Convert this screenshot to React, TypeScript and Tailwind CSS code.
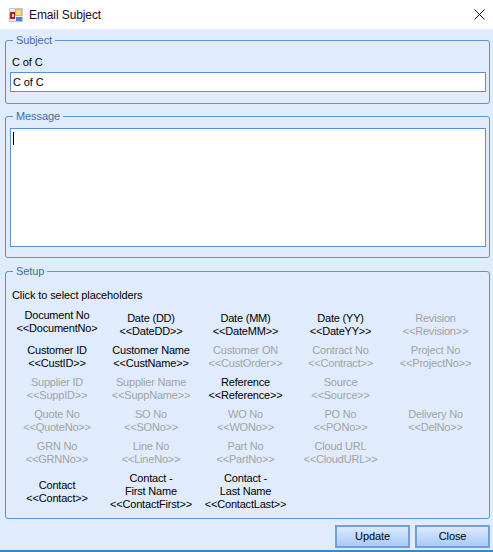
const placeholders: (Item | null)[][] = [
  [
    { label: ["Document No"], tag: "<<DocumentNo>", on: true, lift: true },
    { label: ["Date (DD)"], tag: "<<DateDD>>", on: true },
    { label: ["Date (MM)"], tag: "<<DateMM>>", on: true },
    { label: ["Date (YY)"], tag: "<<DateYY>>", on: true },
    { label: ["Revision"], tag: "<<Revision>>" },
  ],
  [
    { label: ["Customer ID"], tag: "<<CustID>>", on: true },
    { label: ["Customer Name"], tag: "<<CustName>>", on: true },
    { label: ["Customer ON"], tag: "<<CustOrder>>" },
    { label: ["Contract No"], tag: "<<Contract>>" },
    { label: ["Project No"], tag: "<<ProjectNo>>" },
  ],
  [
    { label: ["Supplier ID"], tag: "<<SuppID>>" },
    { label: ["Supplier Name"], tag: "<<SuppName>>" },
    { label: ["Reference"], tag: "<<Reference>>", on: true },
    { label: ["Source"], tag: "<<Source>>" },
    null,
  ],
  [
    { label: ["Quote No"], tag: "<<QuoteNo>>" },
    { label: ["SO No"], tag: "<<SONo>>" },
    { label: ["WO No"], tag: "<<WONo>>" },
    { label: ["PO No"], tag: "<<PONo>>" },
    { label: ["Delivery No"], tag: "<<DelNo>>" },
  ],
  [
    { label: ["GRN No"], tag: "<<GRNNo>>" },
    { label: ["Line No"], tag: "<<LineNo>>" },
    { label: ["Part No"], tag: "<<PartNo>>" },
    { label: ["Cloud URL"], tag: "<<CloudURL>>" },
    null,
  ],
];

const contacts: Item[] = [
  { label: ["Contact"], tag: "<<Contact>>", on: true },
  { label: ["Contact -", "First Name"], tag: "<<ContactFirst>>", on: true },
  { label: ["Contact -", "Last Name"], tag: "<<ContactLast>>", on: true },
];

type Item = { label: string[]; tag: string; on?: boolean; lift?: boolean };

function Placeholder({ item }: { item: Item }) {
  return (
    <div
      className={`flex flex-col items-center text-center leading-[13px] tracking-[-0.2px] whitespace-nowrap ${
        item.on ? "text-black" : "text-[#a3a3a3]"
      } ${item.lift ? "mb-[6px]" : ""}`}
    >
      {item.label.map((line) => (
        <span key={line}>{line}</span>
      ))}
      <span>{item.tag}</span>
    </div>
  );
}

function Group({ title, className, children }: { title: string; className: string; children: React.ReactNode }) {
  return (
    <fieldset className={`ml-[5px] mr-[3px] min-w-0 rounded-[3px] border border-[#5b90d6] pl-[4px] pr-[3px] ${className}`}>
      <legend className="ml-[3px] px-[3px] text-[#3d6ea8] leading-[14px]">{title}</legend>
      {children}
    </fieldset>
  );
}

function AppIcon() {
  return (
    <svg width="14" height="14" viewBox="0 0 14 14" className="shrink-0">
      <rect x="0" y="0" width="14" height="14" fill="#c8c8c8" />
      <rect x="1" y="1" width="12" height="12" fill="#efefef" />
      <rect x="1" y="4" width="5" height="7" fill="#b02020" />
      <rect x="3" y="6" width="2" height="3" fill="#f0d0c0" />
      <rect x="6" y="1" width="7" height="7" fill="#f0b820" />
      <rect x="7" y="2" width="5" height="5" fill="#fbdc70" />
      <rect x="7" y="9" width="6" height="4" fill="#4d80d8" />
    </svg>
  );
}

export default function App() {
  return (
    <div className="flex h-[552px] w-[493px] flex-col overflow-hidden bg-white font-['Liberation_Sans',sans-serif] text-[11px] tracking-[-0.1px] text-black">
      <div className="flex h-[29px] shrink-0 items-center pl-[9px] pr-[8px]">
        <AppIcon />
        <span className="ml-[6px] text-[12px] text-[#1c0a2c]">Email Subject</span>
        <svg width="11" height="11" viewBox="0 0 11 11" className="ml-auto">
          <path d="M0.5 0.5 L10.5 10.5 M10.5 0.5 L0.5 10.5" stroke="#111" strokeWidth="1" fill="none" />
        </svg>
      </div>

      <div className="flex min-h-0 flex-1 flex-col border-b-2 border-[#2f8ad0] bg-[#e0ecfd] pt-[4px]">
        <Group title="Subject" className="h-[71px] shrink-0">
          <div className="mt-[8px] ml-[2px] leading-[14px]">C of C</div>
          <input
            readOnly
            value="C of C"
            className="mt-[3px] block h-[20px] w-full border border-[#5b90d6] bg-white px-[2px] outline-none"
          />
        </Group>

        <Group title="Message" className="mt-[5px] h-[149px] shrink-0">
          <div className="mt-[5px] h-[119px] border border-[#5b90d6] bg-white pl-[2px] pt-[3px]">
            <div className="h-[13px] w-px bg-black" />
          </div>
        </Group>

        <Group title="Setup" className="mt-[6px] h-[255px] shrink-0">
          <div className="mt-[10px] ml-[2px] leading-[14px]">Click to select placeholders</div>
          <div className="mt-[7px] grid grid-cols-[94px_94px_95px_95px_95px] auto-rows-[32px] items-center justify-items-center">
            {placeholders.map((row) =>
              row.map((item, i) =>
                item ? <Placeholder key={item.tag} item={item} /> : <div key={i} />,
              ),
            )}
          </div>
          <div className="grid h-[45px] grid-cols-[94px_94px_95px_95px_95px] items-center justify-items-center">
            {contacts.map((item) => (
              <Placeholder key={item.tag} item={item} />
            ))}
          </div>
        </Group>

        <div className="mt-[6px] flex justify-end gap-[5px] pr-[3px]">
          <button className="h-[23px] w-[75px] border-2 border-[#6f9fdc] bg-gradient-to-b from-[#dbe8fc] to-[#a9caf5]">
            Update
          </button>
          <button className="h-[23px] w-[75px] border-2 border-[#6f9fdc] bg-gradient-to-b from-[#dbe8fc] to-[#a9caf5]">
            Close
          </button>
        </div>
      </div>
    </div>
  );
}
